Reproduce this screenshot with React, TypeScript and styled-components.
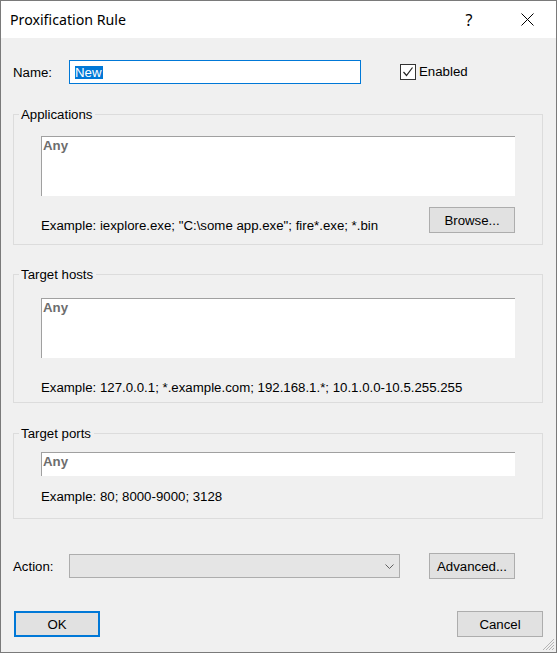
import React from 'react';
import styled, { createGlobalStyle } from 'styled-components';

const GlobalStyle = createGlobalStyle`
  html, body {
    margin: 0;
    padding: 0;
    background: #f0f0f0;
  }

  body {
    font-family: "Liberation Sans", Arial, sans-serif;
    font-size: 13.25px;
    color: #000;
  }
`;

const Window = styled.div`
  position: relative;
  width: 557px;
  height: 653px;
  box-sizing: border-box;
  border: 1px solid #7a7a7a;
  display: flex;
  flex-direction: column;
  background: #f0f0f0;
`;

const TitleBar = styled.div`
  height: 37px;
  background: #fff;
  display: flex;
  align-items: center;
  padding-left: 9px;
`;

const Title = styled.div`
  flex: 1;
  font-family: "Segoe UI", "Noto Sans", sans-serif;
  font-size: 14.2px;
  padding-bottom: 1px;
`;

const CaptionButton = styled.div`
  width: 58px;
  height: 37px;
  display: flex;
  align-items: center;
  justify-content: center;
  font-family: "Segoe UI", "Noto Sans", sans-serif;
  font-size: 16px;
`;

const Body = styled.div`
  flex: 1;
  padding: 22px 13px 0 12px;
  display: flex;
  flex-direction: column;
`;

const Row = styled.div`
  display: flex;
  align-items: center;
`;

const FieldLabel = styled.label`
  width: 56px;
  flex-shrink: 0;
`;

const TextInput = styled.div`
  width: 292px;
  height: 24px;
  box-sizing: border-box;
  border: 1px solid #0078d7;
  background: #fff;
  display: flex;
  align-items: center;
  padding-left: 5px;
`;

const Selected = styled.span`
  background: #0078d7;
  color: #fff;
  line-height: 13px;
  padding: 0 1px 0 0;
`;

const CheckWrap = styled.label`
  display: flex;
  align-items: center;
  margin-left: 39px;
  gap: 3px;
  padding-bottom: 1px;
`;

const CheckBox = styled.span`
  width: 16px;
  height: 16px;
  box-sizing: border-box;
  border: 1px solid #333;
  background: #fff;
  display: flex;
  align-items: center;
  justify-content: center;
`;

const Group = styled.fieldset<{ $mt: number }>`
  margin: ${p => p.$mt}px 0 0 0;
  padding: 0;
  border: 1px solid #dcdcdc;
  min-width: 0;
`;

const Legend = styled.legend`
  margin-left: 5px;
  padding: 0 3px 0 2px;
  line-height: 15px;
`;

const GroupBody = styled.div<{ $top: number; $bottom: number; $gap: number }>`
  display: flex;
  flex-direction: column;
  gap: ${p => p.$gap}px;
  padding: ${p => p.$top}px 27px ${p => p.$bottom}px 27px;
`;

const ListBox = styled.div<{ $h: number }>`
  height: ${p => p.$h}px;
  background: #fff;
  border-top: 1px solid #a0a0a0;
  border-left: 1px solid #a0a0a0;
  padding: 1px 0 0 1px;
  box-sizing: border-box;
`;

const AnyText = styled.span`
  font-weight: bold;
  color: #6d6d6d;
  line-height: 15px;
`;

const HintRow = styled.div`
  display: flex;
  align-items: flex-end;
  justify-content: space-between;
`;

const Hint = styled.span`
  line-height: 15px;
`;

const Button = styled.button<{ $default?: boolean }>`
  width: 86px;
  height: 26px;
  box-sizing: border-box;
  background: #e1e1e1;
  border: ${p => (p.$default ? '2px solid #0078d7' : '1px solid #adadad')};
  font-family: "Liberation Sans", Arial, sans-serif;
  font-size: 13.25px;
  color: #000;
  padding: 0;
`;

const ActionRow = styled(Row)`
  margin-top: 34px;
`;

const Combo = styled.div`
  width: 331px;
  height: 24px;
  box-sizing: border-box;
  background: #e5e5e5;
  border: 1px solid #adadad;
  display: flex;
  align-items: center;
  justify-content: flex-end;
  padding-right: 5px;
  margin-right: 29px;
`;

const Footer = styled.div`
  margin-top: 32px;
  display: flex;
  justify-content: space-between;
  padding-left: 1px;
`;

const Grip = styled.svg`
  position: absolute;
  right: 1px;
  bottom: 1px;
`;

export default function App() {
  return (
    <>
      <GlobalStyle />
      <Window>
        <TitleBar>
          <Title>Proxification Rule</Title>
          <CaptionButton>?</CaptionButton>
          <CaptionButton>
            <svg width="13" height="13" viewBox="0 0 13 13">
              <path d="M0.5 0.5 L12.5 12.5 M12.5 0.5 L0.5 12.5" stroke="#000" strokeWidth="1" fill="none" />
            </svg>
          </CaptionButton>
        </TitleBar>

        <Body>
          <Row>
            <FieldLabel>Name:</FieldLabel>
            <TextInput>
              <Selected>New</Selected>
            </TextInput>
            <CheckWrap>
              <CheckBox>
                <svg width="12" height="12" viewBox="0 0 12 12">
                  <path d="M1.5 6 L4.5 9.5 L10.5 1.5" stroke="#222" strokeWidth="1.2" fill="none" />
                </svg>
              </CheckBox>
              Enabled
            </CheckWrap>
          </Row>

          <Group $mt={23}>
            <Legend>Applications</Legend>
            <GroupBody $top={14} $bottom={11} $gap={11}>
              <ListBox $h={60}>
                <AnyText>Any</AnyText>
              </ListBox>
              <HintRow>
                <Hint>Example: iexplore.exe; "C:\some app.exe"; fire*.exe; *.bin</Hint>
                <Button>Browse...</Button>
              </HintRow>
            </GroupBody>
          </Group>

          <Group $mt={22}>
            <Legend>Target hosts</Legend>
            <GroupBody $top={16} $bottom={7} $gap={22}>
              <ListBox $h={60}>
                <AnyText>Any</AnyText>
              </ListBox>
              <Hint>Example: 127.0.0.1; *.example.com; 192.168.1.*; 10.1.0.0-10.5.255.255</Hint>
            </GroupBody>
          </Group>

          <Group $mt={23}>
            <Legend>Target ports</Legend>
            <GroupBody $top={11} $bottom={14} $gap={13}>
              <ListBox $h={24}>
                <AnyText>Any</AnyText>
              </ListBox>
              <Hint>Example: 80; 8000-9000; 3128</Hint>
            </GroupBody>
          </Group>

          <ActionRow>
            <FieldLabel>Action:</FieldLabel>
            <Combo>
              <svg width="9" height="5" viewBox="0 0 9 5">
                <path d="M0.5 0.5 L4.5 4.5 L8.5 0.5" stroke="#606060" strokeWidth="1" fill="none" />
              </svg>
            </Combo>
            <Button>Advanced...</Button>
          </ActionRow>

          <Footer>
            <Button $default>OK</Button>
            <Button>Cancel</Button>
          </Footer>
        </Body>

        <Grip width="12" height="12" viewBox="0 0 12 12">
          <path d="M11 3 L3 11 M11 6 L6 11 M11 9 L9 11 M11 0 L0 11" stroke="#b5b5b5" strokeWidth="1" fill="none" />
        </Grip>
      </Window>
    </>
  );
}
